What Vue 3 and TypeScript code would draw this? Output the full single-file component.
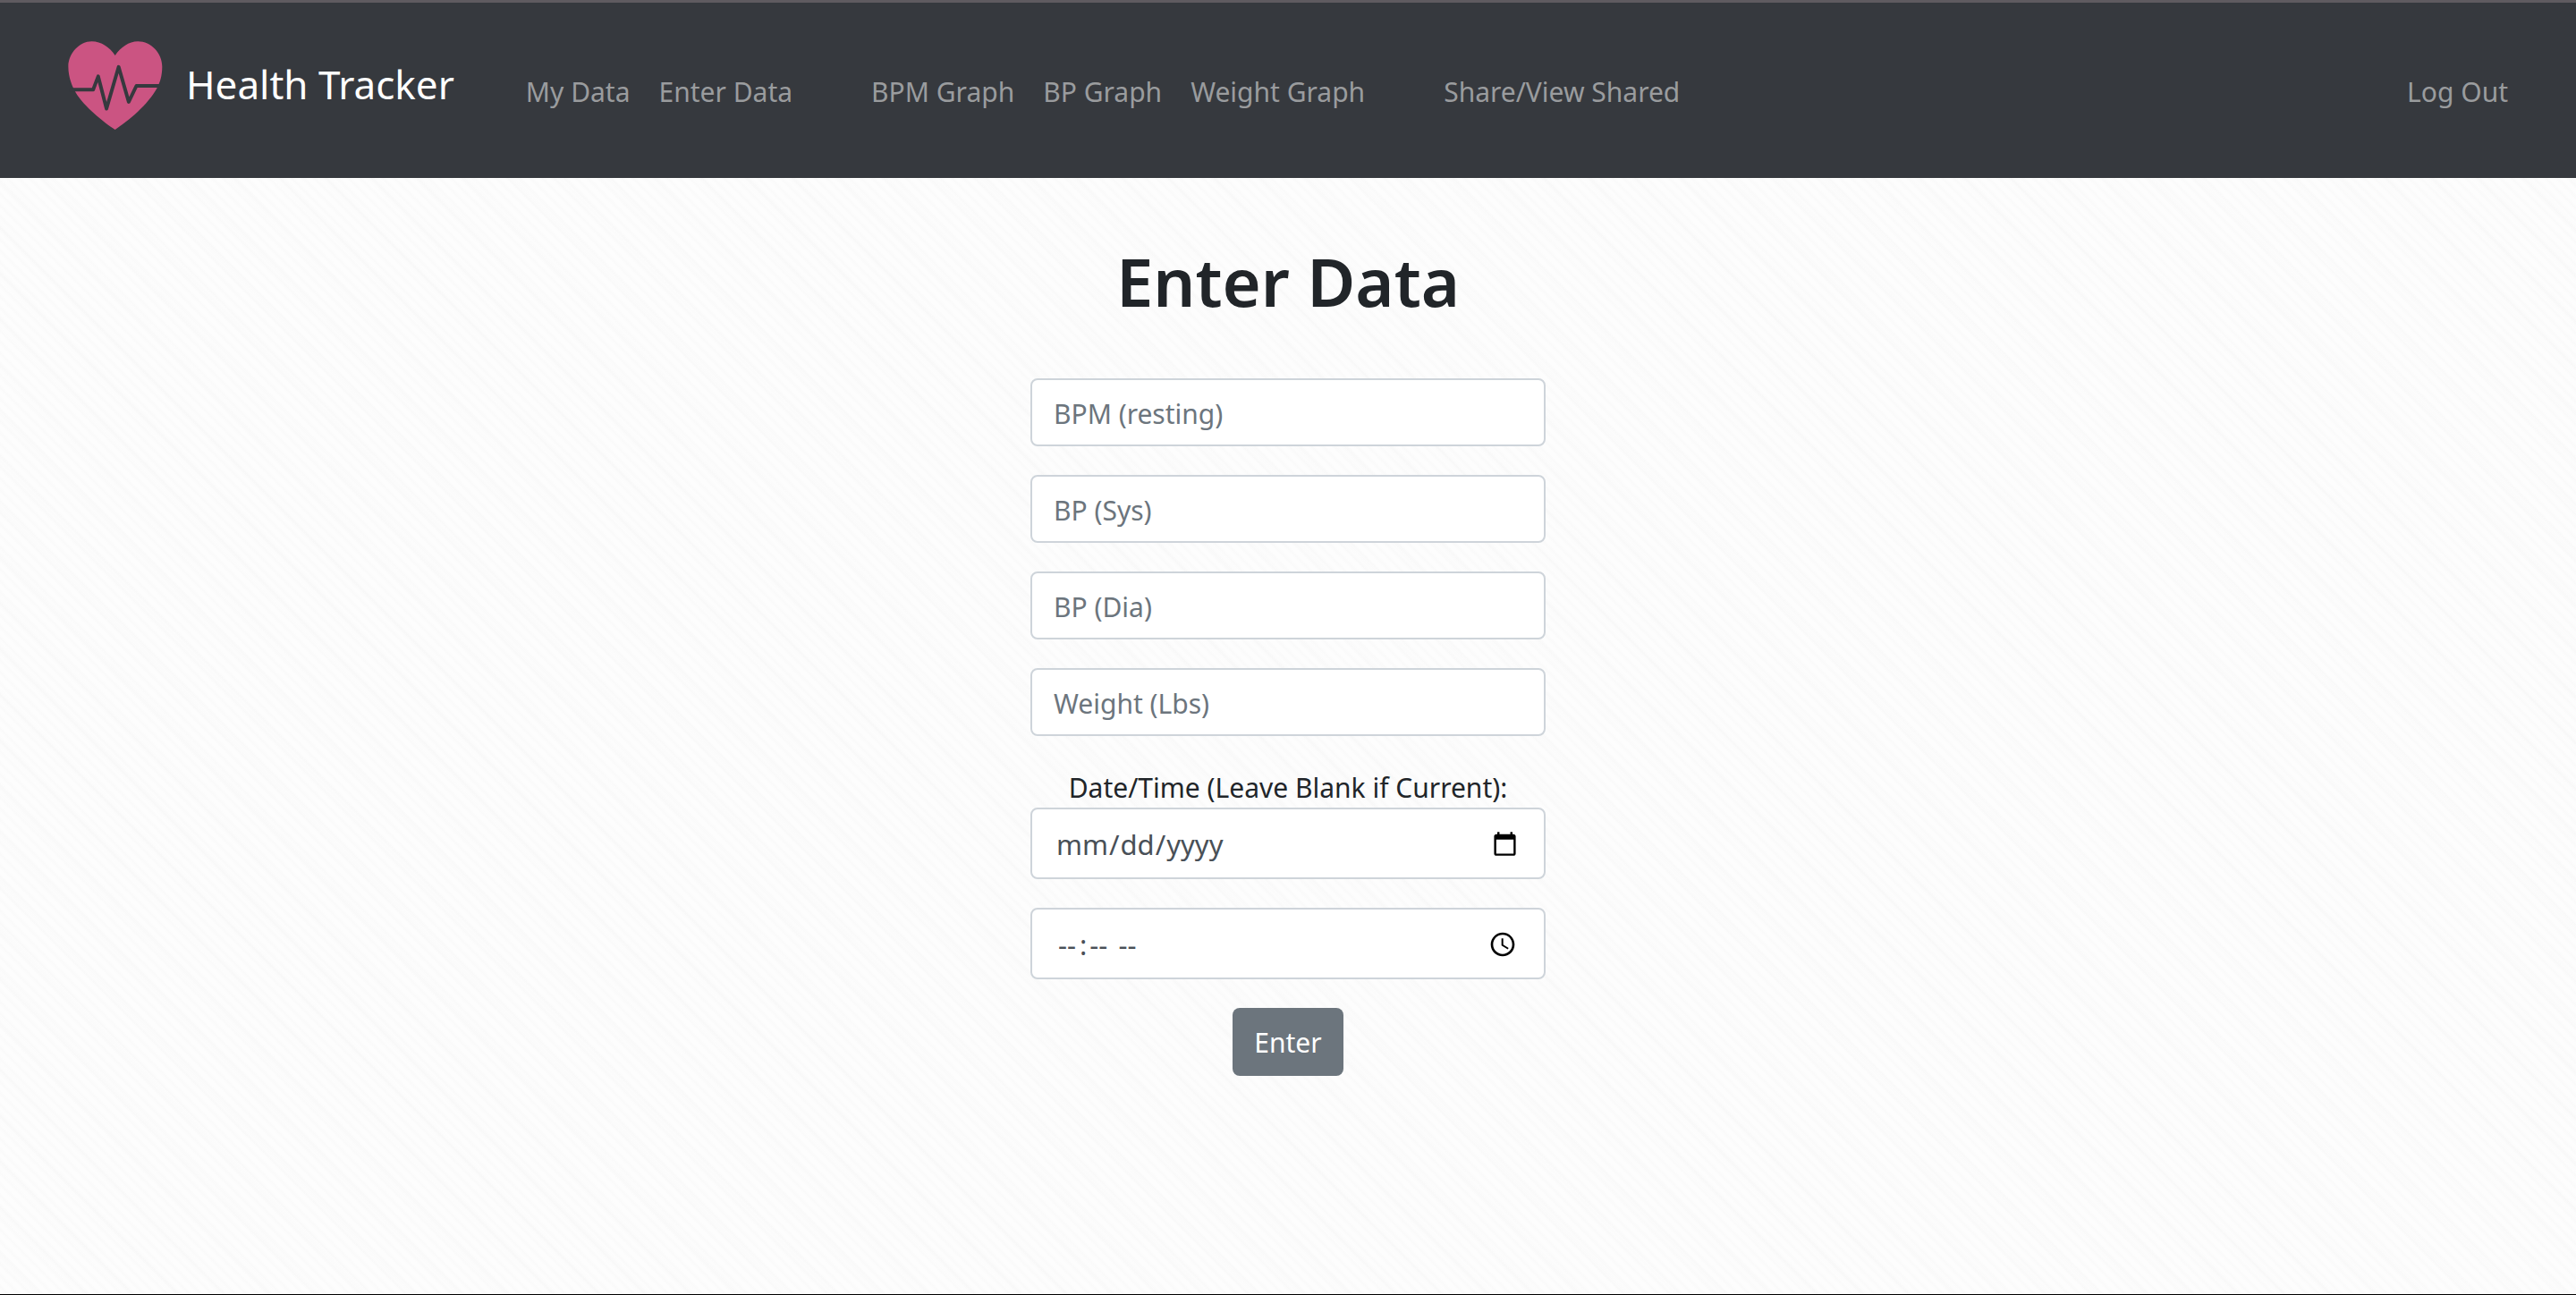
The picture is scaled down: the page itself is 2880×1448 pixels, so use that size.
<script setup lang="ts">
interface Field {
  id: string
  placeholder: string
}

const navGroups: string[][] = [
  ['My Data', 'Enter Data'],
  ['BPM Graph', 'BP Graph', 'Weight Graph'],
  ['Share/View Shared'],
]

const fields: Field[] = [
  { id: 'bpm', placeholder: 'BPM (resting)' },
  { id: 'sys', placeholder: 'BP (Sys)' },
  { id: 'dia', placeholder: 'BP (Dia)' },
  { id: 'weight', placeholder: 'Weight (Lbs)' },
]
</script>

<template>
  <div class="page">
    <header class="navbar">
      <a class="brand" href="#">
        <svg class="logo" viewBox="46 47 318 299" aria-hidden="true">
          <path
            fill="#cb5482"
            d="M204 346C165 320 100 268 72 222C60 202 46 170 46 133C46 88 84 48 125 48C158 48 185 68 204 95C224 68 250 48 281 48C326 48 363 88 363 133C363 165 355 187 346 205C315 262 250 316 204 346Z"
          />
          <path
            class="pulse"
            d="M50 211H130L147 166L175 275L216 134L250 252L276 198H370"
          />
        </svg>
        <span>Health Tracker</span>
      </a>
      <nav class="links">
        <div v-for="(group, i) in navGroups" :key="i" class="group">
          <a v-for="link in group" :key="link" href="#">{{ link }}</a>
        </div>
      </nav>
      <a class="logout" href="#">Log Out</a>
    </header>

    <main class="content">
      <h1>Enter Data</h1>
      <form class="form" @submit.prevent>
        <input
          v-for="field in fields"
          :key="field.id"
          class="control"
          type="text"
          :name="field.id"
          :placeholder="field.placeholder"
          :aria-label="field.placeholder"
        />
        <div class="date-group">
          <label for="date">Date/Time (Leave Blank if Current):</label>
          <input id="date" class="control picker" type="date" name="date" />
        </div>
        <input class="control picker" type="time" name="time" aria-label="Time" />
        <button class="submit" type="submit">Enter</button>
      </form>
    </main>
  </div>
</template>

<style>
body {
  margin: 0;
}
</style>

<style scoped>
.page {
  display: flex;
  flex-direction: column;
  box-sizing: border-box;
  min-height: 100vh;
  border-bottom: 1px solid #000;
  background:
    repeating-linear-gradient(45deg, transparent 0 22px, rgba(0, 0, 0, 0.006) 30px, transparent 37px),
    repeating-linear-gradient(45deg, #fdfdfd 0 3px, #fafafa 6px, #fdfdfd 9px);
  color: #212529;
  font-family: 'Noto Sans', 'Open Sans', sans-serif;
  font-size: 30px;
  line-height: 48px;
}

.navbar {
  display: flex;
  align-items: flex-start;
  padding: 43px 76px 54px;
  border-top: 3px solid #5f5b60;
  background: #36393e;
}

a {
  color: #9a9c9e;
  text-decoration: none;
}

.brand {
  display: flex;
  gap: 26px;
  color: #fff;
  font-size: 44px;
  line-height: 96px;
}

.logo {
  width: 106px;
  height: 99px;
}

.pulse {
  fill: none;
  stroke: #36393e;
  stroke-width: 12;
  stroke-linejoin: round;
}

.links {
  display: flex;
  gap: 88px;
  margin: 33px auto 0 80px;
}

.group {
  display: flex;
  gap: 32px;
}

.logout {
  margin-top: 33px;
}

.content {
  display: flex;
  flex-direction: column;
  align-items: center;
  padding-top: 68px;
}

h1 {
  margin: 0 0 60px;
  font-size: 74px;
  font-weight: 600;
  line-height: 96px;
}

.form {
  display: flex;
  flex-direction: column;
  align-items: center;
  gap: 32px;
  width: 20%;
}

.control {
  box-sizing: border-box;
  width: 100%;
  height: 76px;
  padding: 12px 24px 10px;
  border: 2px solid #ced4da;
  border-radius: 8px;
  background: #fff;
  color: #495057;
  font: inherit;
}

.control::placeholder {
  color: #6c757d;
  opacity: 1;
}

.date-group {
  display: flex;
  flex-direction: column;
  width: 100%;
  text-align: center;
}

label {
  padding-top: 4px;
  line-height: 44px;
}

.picker {
  height: 80px;
  padding: 12px 26px 10px;
  font-size: 31px;
}

.picker::-webkit-datetime-edit-hour-field,
.picker::-webkit-datetime-edit-minute-field,
.picker::-webkit-datetime-edit-ampm-field {
  padding: 0 4px 0 3px;
}

.submit {
  height: 76px;
  padding: 2px 24px 0;
  border: 0;
  border-radius: 8px;
  background: #6c757d;
  color: #fff;
  font: inherit;
}
</style>
